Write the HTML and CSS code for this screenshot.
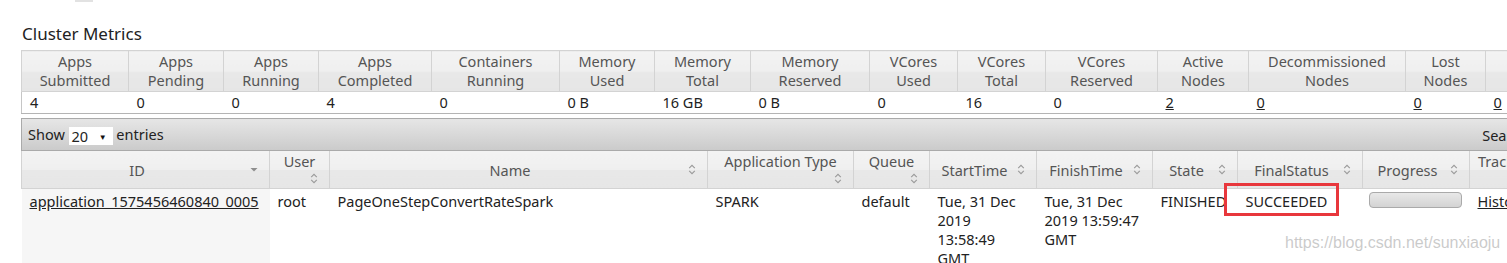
FILE: index.html
```html
<!DOCTYPE html>
<html lang="en">
<head>
<meta charset="UTF-8">
<title>All Applications</title>
<link rel="stylesheet" href="styles.css">
</head>
<body>
<div class="page">
    <div class="top-mark"></div>
    <h3 class="title">Cluster Metrics</h3>

    <table class="metrics">
        <colgroup>
            <col style="width:107px"><col style="width:95px"><col style="width:95px"><col style="width:113px">
            <col style="width:128px"><col style="width:95px"><col style="width:96px"><col style="width:119px">
            <col style="width:88px"><col style="width:88px"><col style="width:112px"><col style="width:91px">
            <col style="width:157px"><col style="width:80px"><col style="width:140px"><col style="width:120px">
        </colgroup>
        <thead>
            <tr>
                <th>Apps<br>Submitted</th>
                <th>Apps<br>Pending</th>
                <th>Apps<br>Running</th>
                <th>Apps<br>Completed</th>
                <th>Containers<br>Running</th>
                <th>Memory<br>Used</th>
                <th>Memory<br>Total</th>
                <th>Memory<br>Reserved</th>
                <th>VCores<br>Used</th>
                <th>VCores<br>Total</th>
                <th>VCores<br>Reserved</th>
                <th>Active<br>Nodes</th>
                <th>Decommissioned<br>Nodes</th>
                <th>Lost<br>Nodes</th>
                <th>Unhealthy<br>Nodes</th>
                <th>Rebooted<br>Nodes</th>
            </tr>
        </thead>
        <tbody>
            <tr>
                <td>4</td>
                <td>0</td>
                <td>0</td>
                <td>4</td>
                <td>0</td>
                <td>0 B</td>
                <td>16 GB</td>
                <td>0 B</td>
                <td>0</td>
                <td>16</td>
                <td>0</td>
                <td><a href="#">2</a></td>
                <td><a href="#">0</a></td>
                <td><a href="#">0</a></td>
                <td><a href="#">0</a></td>
                <td><a href="#">0</a></td>
            </tr>
        </tbody>
    </table>

    <div class="apps">
        <div class="toolbar">
            <div class="length">Show <span class="select">20<span class="caret">&#9660;</span></span> entries</div>
            <div class="filter">Search: <span class="search-box"></span></div>
        </div>
        <table class="apps-table">
            <colgroup>
                <col style="width:248px"><col style="width:60px"><col style="width:378px"><col style="width:146px">
                <col style="width:76px"><col style="width:107px"><col style="width:116px"><col style="width:85px">
                <col style="width:125px"><col style="width:107px"><col style="width:92px"><col style="width:100px">
            </colgroup>
            <thead>
                <tr>
                    <th>
                        <div class="th-in">
                            <span class="th-text">ID</span>
                            <svg class="sort" width="8" height="11" viewBox="0 0 8 11"><polygon points="0.5,4 7.5,4 4,7.5" fill="#8e8e8e"/></svg>
                        </div>
                    </th>
                    <th class="wrap">
                        <div class="th-text">User</div>
                        <div class="th-icon"><svg class="sort" width="8" height="11" viewBox="0 0 8 11"><path d="M1.2 4.2L4 1.4L6.8 4.2M1.2 6.8L4 9.6L6.8 6.8" fill="none" stroke="#9a9a9a" stroke-width="1.1"/></svg></div>
                    </th>
                    <th>
                        <div class="th-in">
                            <span class="th-text">Name</span>
                            <svg class="sort" width="8" height="11" viewBox="0 0 8 11"><path d="M1.2 4.2L4 1.4L6.8 4.2M1.2 6.8L4 9.6L6.8 6.8" fill="none" stroke="#9a9a9a" stroke-width="1.1"/></svg>
                        </div>
                    </th>
                    <th class="wrap">
                        <div class="th-text">Application Type</div>
                        <div class="th-icon"><svg class="sort" width="8" height="11" viewBox="0 0 8 11"><path d="M1.2 4.2L4 1.4L6.8 4.2M1.2 6.8L4 9.6L6.8 6.8" fill="none" stroke="#9a9a9a" stroke-width="1.1"/></svg></div>
                    </th>
                    <th class="wrap">
                        <div class="th-text">Queue</div>
                        <div class="th-icon"><svg class="sort" width="8" height="11" viewBox="0 0 8 11"><path d="M1.2 4.2L4 1.4L6.8 4.2M1.2 6.8L4 9.6L6.8 6.8" fill="none" stroke="#9a9a9a" stroke-width="1.1"/></svg></div>
                    </th>
                    <th>
                        <div class="th-in">
                            <span class="th-text">StartTime</span>
                            <svg class="sort" width="8" height="11" viewBox="0 0 8 11"><path d="M1.2 4.2L4 1.4L6.8 4.2M1.2 6.8L4 9.6L6.8 6.8" fill="none" stroke="#9a9a9a" stroke-width="1.1"/></svg>
                        </div>
                    </th>
                    <th>
                        <div class="th-in">
                            <span class="th-text">FinishTime</span>
                            <svg class="sort" width="8" height="11" viewBox="0 0 8 11"><path d="M1.2 4.2L4 1.4L6.8 4.2M1.2 6.8L4 9.6L6.8 6.8" fill="none" stroke="#9a9a9a" stroke-width="1.1"/></svg>
                        </div>
                    </th>
                    <th>
                        <div class="th-in">
                            <span class="th-text">State</span>
                            <svg class="sort" width="8" height="11" viewBox="0 0 8 11"><path d="M1.2 4.2L4 1.4L6.8 4.2M1.2 6.8L4 9.6L6.8 6.8" fill="none" stroke="#9a9a9a" stroke-width="1.1"/></svg>
                        </div>
                    </th>
                    <th>
                        <div class="th-in">
                            <span class="th-text">FinalStatus</span>
                            <svg class="sort" width="8" height="11" viewBox="0 0 8 11"><path d="M1.2 4.2L4 1.4L6.8 4.2M1.2 6.8L4 9.6L6.8 6.8" fill="none" stroke="#9a9a9a" stroke-width="1.1"/></svg>
                        </div>
                    </th>
                    <th>
                        <div class="th-in">
                            <span class="th-text">Progress</span>
                            <svg class="sort" width="8" height="11" viewBox="0 0 8 11"><path d="M1.2 4.2L4 1.4L6.8 4.2M1.2 6.8L4 9.6L6.8 6.8" fill="none" stroke="#9a9a9a" stroke-width="1.1"/></svg>
                        </div>
                    </th>
                    <th class="wrap">
                        <div class="th-text">Tracking UI</div>
                        <div class="th-icon"><svg class="sort" width="8" height="11" viewBox="0 0 8 11"><path d="M1.2 4.2L4 1.4L6.8 4.2M1.2 6.8L4 9.6L6.8 6.8" fill="none" stroke="#9a9a9a" stroke-width="1.1"/></svg></div>
                    </th>
                    <th class="wrap">
                        <div class="th-text">Blacklisted Nodes</div>
                        <div class="th-icon"><svg class="sort" width="8" height="11" viewBox="0 0 8 11"><path d="M1.2 4.2L4 1.4L6.8 4.2M1.2 6.8L4 9.6L6.8 6.8" fill="none" stroke="#9a9a9a" stroke-width="1.1"/></svg></div>
                    </th>
                </tr>
            </thead>
            <tbody>
                <tr>
                    <td class="sorted"><a href="#">application_1575456460840_0005</a></td>
                    <td>root</td>
                    <td>PageOneStepConvertRateSpark</td>
                    <td>SPARK</td>
                    <td>default</td>
                    <td>Tue, 31 Dec<br>2019<br>13:58:49<br>GMT</td>
                    <td>Tue, 31 Dec<br>2019 13:59:47<br>GMT</td>
                    <td>FINISHED</td>
                    <td>SUCCEEDED</td>
                    <td class="progress-cell"><div class="progress"></div></td>
                    <td><a href="#">History</a></td>
                    <td>0</td>
                </tr>
            </tbody>
        </table>
    </div>

    <div class="highlight"></div>
    <div class="watermark">https://blog.csdn.net/sunxiaoju</div>
</div>
</body>
</html>
```

FILE: styles.css
```css
html {
    overflow: hidden;
}

body {
    margin: 0;
    font-family: "Noto Sans", "Open Sans", sans-serif;
    font-size: 14.5px;
    color: #222;
    background-color: #fff;
}

a {
    color: #222;
    text-decoration: underline;
}

.page {
    position: relative;
    width: 1760px;
    padding-left: 21px;
}

.top-mark {
    width: 18px;
    height: 2px;
    margin-left: 54px;
    background-color: #e2e2e2;
}

.title {
    margin: 21px 0 5px 1px;
    font-size: 17px;
    line-height: 22px;
    font-weight: normal;
    color: #222;
}

table {
    border-collapse: collapse;
    table-layout: fixed;
}

/* cluster metrics */
.metrics {
    width: 1724px;
    border-left: 1px solid #c6c6c6;
}

.metrics th {
    padding: 1px 4px;
    line-height: 19px;
    font-weight: normal;
    color: #555;
    border: 1px solid #d3d3d3;
    background: linear-gradient(to bottom, #f3f3f3 0%, #efefef 50%, #e8e8e8 52%, #e6e6e6 100%);
}

.metrics td {
    padding: 1px 8px;
    line-height: 19px;
    text-align: left;
    border-bottom: 1px solid #b4b4b4;
}

/* applications */
.apps {
    width: 1640px;
    margin-top: 4px;
}

.toolbar {
    display: flex;
    justify-content: space-between;
    align-items: center;
    height: 31px;
    padding: 0 6px;
    border: 1px solid #aaa;
    background: linear-gradient(to bottom, #e6e6e6 0%, #d6d6d6 60%, #cbcbcb 100%);
    color: #222;
}

.select {
    display: inline-flex;
    align-items: center;
    width: 44px;
    height: 18px;
    padding-left: 3px;
    box-sizing: border-box;
    background-color: #fff;
    vertical-align: middle;
}

.caret {
    margin-left: auto;
    padding-right: 6px;
    font-size: 8px;
    color: #111;
}

.filter {
    display: flex;
    align-items: center;
    gap: 4px;
}

.search-box {
    display: inline-block;
    width: 116px;
    height: 20px;
    background-color: #fff;
    border: 1px solid #aaa;
}

.apps-table {
    width: 1640px;
}

.apps-table th {
    padding: 0 11px 0 6px;
    height: 37px;
    line-height: 18px;
    font-weight: normal;
    color: #555;
    border: 1px solid #d3d3d3;
    border-top: 0;
    background: linear-gradient(to bottom, #f3f3f3 0%, #efefef 50%, #e8e8e8 52%, #e6e6e6 100%);
}

.th-in {
    display: flex;
    align-items: center;
    gap: 4px;
}

.th-text {
    flex: 1;
    text-align: center;
    white-space: nowrap;
}

.apps-table th.wrap {
    padding: 0 11px 0 8px;
}

.wrap .th-text {
    display: block;
    margin-right: -3px;
}

.th-icon {
    display: flex;
    justify-content: flex-end;
    align-items: center;
    height: 18px;
}

.sort {
    display: block;
    flex: none;
}

.apps-table td {
    padding: 3px 8px;
    line-height: 19px;
    vertical-align: top;
    text-align: left;
    white-space: nowrap;
}

.apps-table td.sorted {
    background-color: #f6f6f6;
    height: 80px;
}

.apps-table td.progress-cell {
    padding-left: 6px;
}

.progress {
    width: 93px;
    height: 16px;
    box-sizing: border-box;
    border: 1px solid #aaa;
    border-radius: 4px;
    background: linear-gradient(to bottom, #e8e8e8, #d3d3d3);
}

/* annotation overlays from the screenshot */
.highlight {
    position: absolute;
    left: 1224px;
    top: 183px;
    width: 115px;
    height: 33px;
    box-sizing: border-box;
    border: 3px solid #e8373c;
}

.watermark {
    position: absolute;
    left: 1285px;
    top: 234px;
    font-family: "Liberation Sans", Arial, sans-serif;
    font-size: 16px;
    line-height: 18px;
    color: rgba(150, 150, 150, 0.5);
}
```
